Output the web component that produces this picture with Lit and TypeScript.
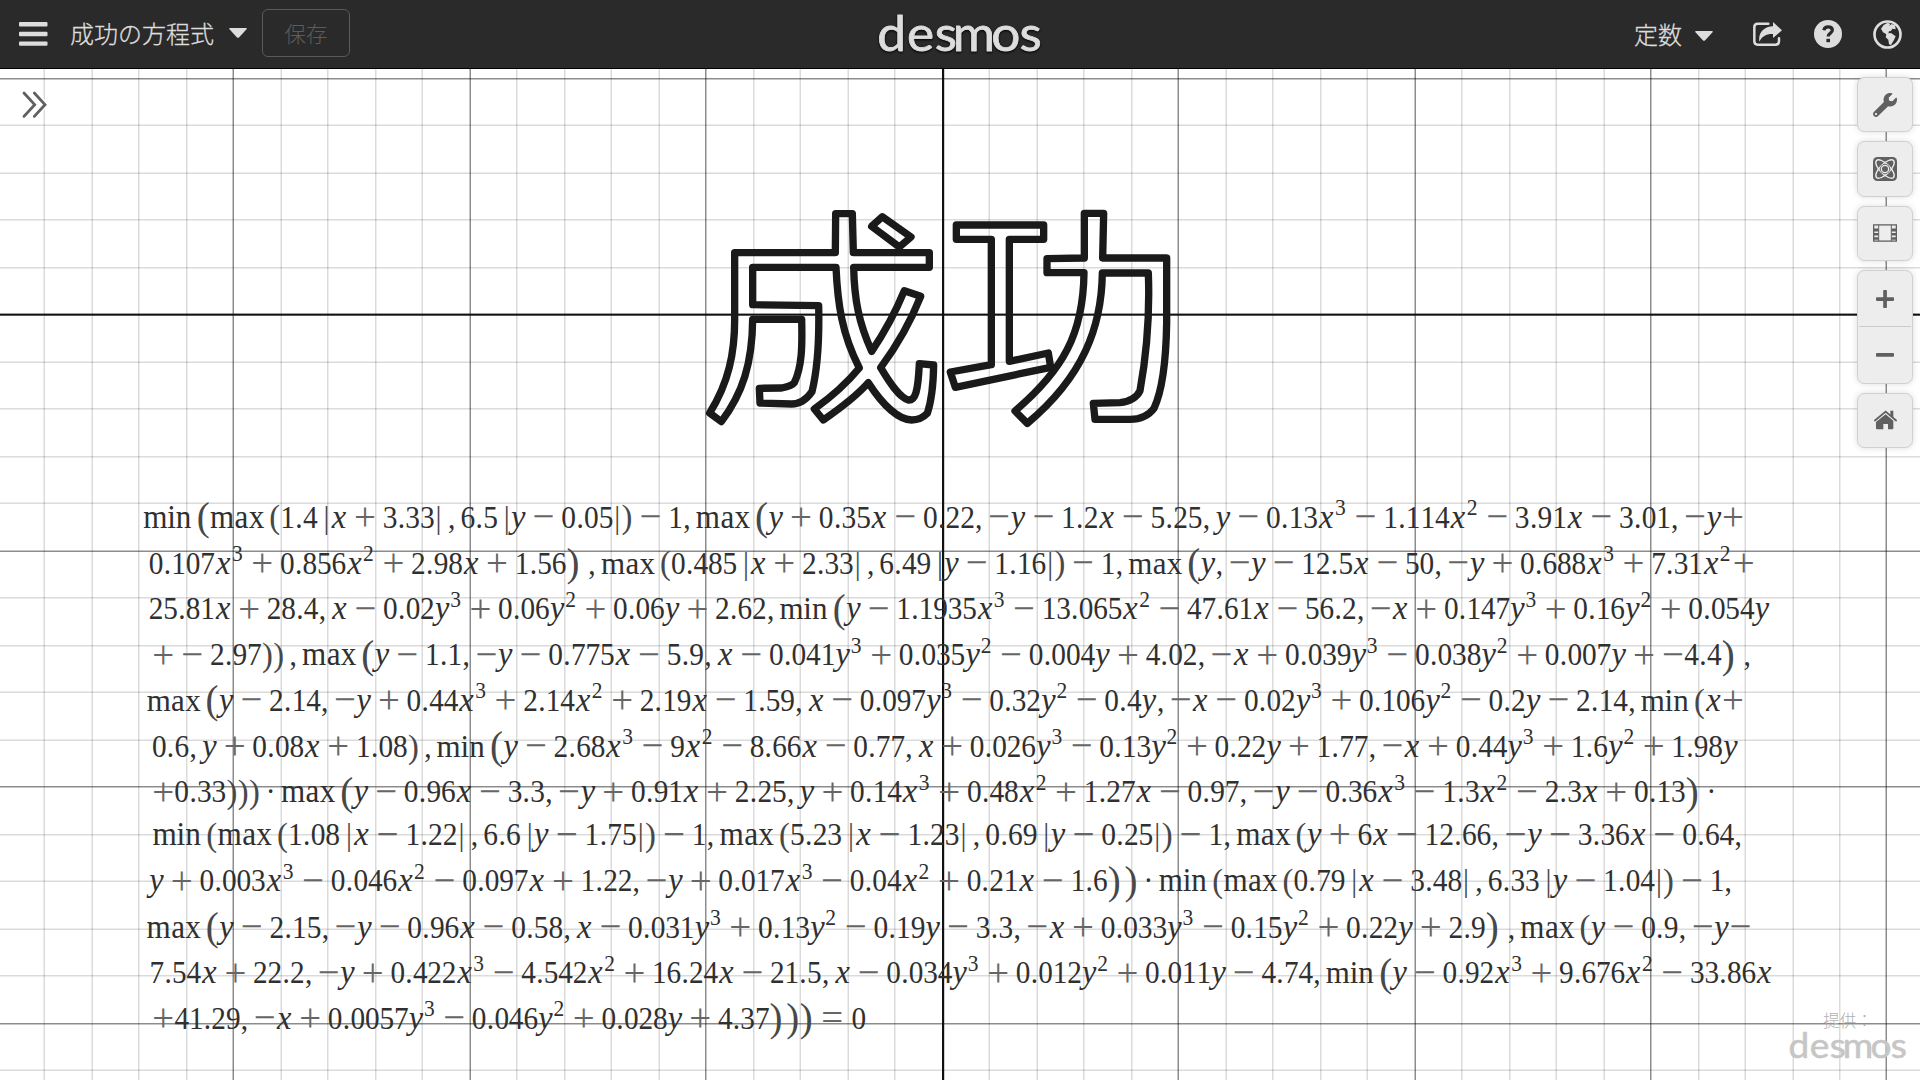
import { LitElement, html, svg, css } from "lit";
import { customElement, property } from "lit/decorators.js";

/* ---------- formula typesetting ---------- */

// ^ marks a superscript digit, { } are tall parentheses, < > are absolute-value bars, ~ is a hair of space.
type Line = { src: string; y: number; left: number; right: number };

const LINES: Line[] = [
  { y: 526.7, left: 144.2, right: 1742.6, src: "min{max(1.4<x+3.33>,6.5<y-0.05>)-1,max{y+0.35x-0.22,-y-1.2x-5.25,y-0.13x^3-1.114x^2-3.91x-3.01,-y+" },
  { y: 572.7, left: 149.9, right: 1753.4, src: "0.107x^3+0.856x^2+2.98x+1.56}~,max(0.485<x+2.33>,6.49<y-1.16>)-1,max{y,-y-12.5x-50,-y+0.688x^3+7.31x^2+" },
  { y: 618.3, left: 149.9, right: 1768.6, src: "25.81x+28.4,x-0.02y^3+0.06y^2+0.06y+2.62,min{y-1.1935x^3-13.065x^2-47.61x-56.2,-x+0.147y^3+0.16y^2+0.054y" },
  { y: 664.3, left: 153.5, right: 1749, src: "+-2.97)),max{y-1.1,-y-0.775x-5.9,x-0.041y^3+0.035y^2-0.004y+4.02,-x+0.039y^3-0.038y^2+0.007y+-4.4}~," },
  { y: 710, left: 147.6, right: 1742.6, src: "max{y-2.14,-y+0.44x^3+2.14x^2+2.19x-1.59,x-0.097y^3-0.32y^2-0.4y,-x-0.02y^3+0.106y^2-0.2y-2.14,min(x+" },
  { y: 756, left: 153, right: 1737.2, src: "0.6,y+0.08x+1.08),min{y-2.68x^3-9x^2-8.66x-0.77,x+0.026y^3-0.13y^2+0.22y+1.77,-x+0.44y^3+1.6y^2+1.98y" },
  { y: 801.3, left: 153.5, right: 1712.8, src: "+0.33)))*max{y-0.96x-3.3,-y+0.91x+2.25,y+0.14x^3+0.48x^2+1.27x-0.97,-y-0.36x^3-1.3x^2-2.3x+0.13}~*" },
  { y: 844.7, left: 153.5, right: 1740, src: "min(max(1.08<x-1.22>,6.6<y-1.75>)-1,max(5.23<x-1.23>,0.69<y-0.25>)-1,max(y+6x-12.66,-y-3.36x-0.64," },
  { y: 890.3, left: 149.9, right: 1730, src: "y+0.003x^3-0.046x^2-0.097x+1.22,-y+0.017x^3-0.04x^2+0.21x-1.6}~}*min(max(0.79<x-3.48>,6.33<y-1.04>)-1," },
  { y: 936.7, left: 147.6, right: 1749.3, src: "max{y-2.15,-y-0.96x-0.58,x-0.031y^3+0.13y^2-0.19y-3.3,-x+0.033y^3-0.15y^2+0.22y+2.9}~,max(y-0.9,-y-" },
  { y: 982.3, left: 150.7, right: 1771.6, src: "7.54x+22.2,-y+0.422x^3-4.542x^2+16.24x-21.5,x-0.034y^3+0.012y^2+0.011y-4.74,min{y-0.92x^3+9.676x^2-33.86x" },
  { y: 1028, left: 153.5, right: 864.9, src: "+41.29,-x+0.0057y^3-0.046y^2+0.028y+4.37}~}}=0" },
];

type Kind = "ord" | "op" | "bin" | "rel" | "open" | "close" | "punct";
type Atom = { text: string; kind: Kind; cls: string; w: number[]; lead: number };

const WORD_W: Record<string, number> = { m: 0.833, i: 0.278, n: 0.556, a: 0.5, x: 0.528 };
const THIN = 0.167;
const MED = 0.222;
const THICK = 0.278;

function parse(src: string): Atom[] {
  const out: Atom[] = [];
  let i = 0;
  let kern = 0;
  const push = (text: string, kind: Kind, cls: string, w: number[]) => {
    out.push({ text, kind, cls, w, lead: kern });
    kern = 0;
  };
  while (i < src.length) {
    const c = src[i];
    if (c === "m") {
      const word = src.slice(i, i + 3);
      push(word, "op", "word", [...word].map((l) => WORD_W[l]));
      i += 3;
      continue;
    }
    if (/[0-9]/.test(c)) {
      const num = /^[0-9.]+/.exec(src.slice(i))![0];
      push(num, "ord", "up", [...num].map((d) => (d === "." ? 0.278 : 0.5)));
      i += num.length;
      continue;
    }
    if (c === "^") {
      push(src[i + 1], "ord", "sup", [0.449]);
      i += 2;
      continue;
    }
    if (c === "~") kern = 0.12;
    else if (c === "x") push("x", "ord", "it", [0.572]);
    else if (c === "y") push("y", "ord", "it", [0.52]);
    else if (c === ",") push(",", "punct", "up", [0.278]);
    else if (c === "=") push("=", "rel", "sign", [0.778]);
    else if (c === "*") push("·", "bin", "up", [0.278]);
    else if (c === "+" || c === "-") push(c === "-" ? "−" : "+", "bin", "sign", [0.778]);
    else if (c === "(") push("(", "open", "par", [0.389]);
    else if (c === ")") push(")", "close", "par", [0.389]);
    else if (c === "{") push("(", "open", "big", [0.458]);
    else if (c === "}") push(")", "close", "big", [0.458]);
    else if (c === "<") push("|", "open", "bar", [0.278]);
    else if (c === ">") push("|", "close", "bar", [0.278]);
    i++;
  }
  // A sign with no operand on its left, or nothing it could join on its right, is an ordinary symbol.
  out.forEach((a, k) => {
    if (a.kind !== "bin") return;
    const p = out[k - 1];
    const n = out[k + 1];
    if (!p || p.kind === "bin" || p.kind === "open" || p.kind === "punct" || p.kind === "op" || p.kind === "rel") a.kind = "ord";
    else if (!n || n.kind === "punct" || n.kind === "close") a.kind = "ord";
  });
  return out;
}

function gap(a: Atom, b: Atom): number {
  if (b.cls === "sup") return 0;
  if (a.kind === "bin" || b.kind === "bin") return MED;
  if (a.kind === "rel" || b.kind === "rel") return THICK;
  if (a.kind === "punct") return THIN;
  if (a.kind === "op" || b.kind === "op") return a.kind === "open" ? 0 : THIN;
  if (a.kind === "ord" && b.kind === "open") return THIN;
  if (a.kind === "close" && (b.kind === "punct" || b.kind === "ord")) return THIN;
  return 0;
}

// Blank space between the advance box and the ink, at the two ends of a line.
function bearing(a: Atom, end: boolean): number {
  if (a.cls === "sign") return a.text === "−" ? 0.083 : 0.056;
  if (a.text === "·") return 0.09;
  if (a.text === ",") return 0.08;
  return end && a.cls === "it" ? 0.03 : 0.035;
}

const STRETCH = 1.05;
const SIZE: Record<string, number> = { up: 1.01, word: 1.07, it: 1.12, sup: 0.74, sign: 1.34, par: 1.12, big: 1.34, bar: 1.02 };

function typeset(line: Line) {
  const atoms = parse(line.src);
  const starts: number[] = [];
  let pos = 0;
  atoms.forEach((a, k) => {
    if (k > 0) pos += gap(atoms[k - 1], a) + a.lead;
    starts.push(pos);
    pos += a.w.reduce((s, v) => s + v, 0);
  });
  const l = bearing(atoms[0], false);
  const r = bearing(atoms[atoms.length - 1], true);
  const em = (line.right - line.left) / (pos - l - r);
  const x0 = line.left - l * em;
  const base = (line.y + 0.8) / STRETCH;
  return svg`<text class="math" transform="scale(1 ${STRETCH})">${atoms.map((a, k) => {
    let p = starts[k];
    const xs = a.w.map((w) => {
      const c = x0 + (p + (a.cls === "sup" ? (w - 0.05) / 2 : w / 2)) * em;
      p += w;
      return c.toFixed(1);
    });
    const s = SIZE[a.cls];
    let y = base;
    if (a.cls === "sup") y -= 0.41 * em;
    if (a.cls === "par" || a.cls === "big" || a.cls === "sign") y += 0.25 * em * (s - 1);
    return svg`<tspan class=${a.cls} x=${xs.join(" ")} y=${y.toFixed(1)} font-size=${(s * em).toFixed(2)}>${a.text}</tspan>`;
  })}</text>`;
}

/* ---------- graph ---------- */

const UNIT = 1.5;

function gridLines() {
  const out = [];
  for (let k = -19; k <= 20; k++) {
    if (k === 0) continue;
    const x = (k === 20 ? 1257 : Math.floor(628 + 31.5 * k)) * UNIT;
    out.push(svg`<rect class=${k % 5 === 0 ? "major" : "minor"} x=${x} y="68" width="1.5" height="1012"></rect>`);
  }
  for (let k = -5; k <= 16; k++) {
    if (k === 0) continue;
    const y = Math.floor(209.5 + 31.5 * k) * UNIT;
    out.push(svg`<rect class=${k % 5 === 0 ? "major" : "minor"} x="0" y=${y} width="1920" height="1.5"></rect>`);
  }
  return out;
}

@customElement("graph-paper")
export class GraphPaper extends LitElement {
  static styles = css`
    :host { display: block; width: 1920px; height: 1012px; }
    svg { display: block; }
    .minor { fill: #000; fill-opacity: 0.14; }
    .major { fill: #000; fill-opacity: 0.45; }
    .axis { fill: #111; }
    .curve { fill: none; stroke: #1a1a1a; stroke-width: 22; stroke-linejoin: round; stroke-linecap: round; }
    .math { font-family: "Liberation Serif", "Times New Roman", serif; fill: #303030; text-anchor: middle; }
    .it { font-style: italic; }
    .sign { fill: #666; }
    .par, .big, .bar { fill: #484848; }
  `;
  render() {
    return html`<svg width="1920" height="1012" viewBox="0 68 1920 1012">
      ${gridLines()}
      <rect class="axis" x="0" y="313.6" width="1920" height="2.1"></rect>
      <rect class="axis" x="942" y="68" width="2.2" height="1012"></rect>
      <g class="curve" transform="translate(690 190) scale(.33333)">
        <path d="M437 71H487L490 188H718V232H491C493 330 507 400 545 484C585 425 615 370 643 302L692 319C662 395 622 465 572 533C600 580 628 622 655 630C676 632 684 605 688 521L731 525C730 590 722 640 712 670C695 688 680 690 665 690C625 688 578 645 535 578C498 620 455 652 400 690L373 657C425 620 470 580 508 534C455 430 443 340 438 232H188V344L386 347C388 440 382 540 366 605C350 628 330 642 305 642L210 639L208 595L275 594C295 590 308 585 313 578C336 530 337 470 335 388H188C187 520 158 610 94 695L59 669C115 580 135 490 134 380V188H436Z"></path>
        <path d="M577 80L663 141L628 171L545 109Z"></path>
      </g>
      <g class="curve" transform="translate(930 190) scale(.33333)">
        <path d="M79 105H341V148H238V514L355 489L362 532L76 592L61 546L184 524V148H79Z"></path>
        <path d="M463 70H521L518 204H710V400C708 520 698 600 672 655C655 678 630 688 600 688H495L490 640L570 638C600 635 622 620 630 602C652 480 660 380 655 249H517C515 410 460 560 292 700L255 663C400 540 460 430 462 248H351V206L463 204Z"></path>
      </g>
      ${LINES.map(typeset)}
    </svg>`;
  }
}

/* ---------- wordmark ---------- */

@customElement("word-mark")
export class WordMark extends LitElement {
  @property({ type: Number }) width = 164;
  @property() tone = "#ddd";
  static styles = css`
    :host { display: block; }
    svg { display: block; overflow: visible; }
    text {
      font-family: Lato, "Open Sans", sans-serif; font-size: 47.5px; text-anchor: middle;
      stroke-width: 0.8px; stroke-linejoin: round;
    }
  `;
  render() {
    return html`<svg width=${this.width} height=${this.width * 0.25} viewBox="0 0 164 41">
      <text transform="scale(1.08 1)" x="12.6 39.3 62.8 88.7 118.4 141.200" y="37" fill=${this.tone} stroke=${this.tone}>desmos</text>
    </svg>`;
  }
}

/* ---------- page ---------- */

@customElement("app-root")
export class AppRoot extends LitElement {
  static styles = css`
    :host {
      display: block; position: relative; width: 1920px; height: 1080px; overflow: hidden; background: #fff;
      font-family: "Noto Sans CJK JP", sans-serif;
    }
    * { box-sizing: border-box; }
    svg { display: block; }
    .bar {
      display: grid; grid-template-columns: 1fr 164px 1fr; align-items: center;
      height: 68px; background: #2a2a2a; color: #ddd; padding: 0 18px 0 19px;
      box-shadow: 0 1px 0 #000; position: relative;
    }
    .left { display: flex; align-items: center; height: 68px; }
    .title, .const { -webkit-text-stroke: 0.3px #ddd; }
    .title { font-size: 24px; line-height: 32px; font-weight: 300; margin: -2px 15px 0 22px; white-space: nowrap; }
    .caret { margin-top: -2px; }
    .save {
      width: 88px; height: 48px; margin: 0 0 2px 15px; border: 1px solid #5a5a5a; border-radius: 6px; background: none;
      color: #5c5c5c; font: 300 21.5px/44px "Noto Sans CJK JP", sans-serif; padding: 0;
    }
    .right { display: flex; align-items: center; justify-content: flex-end; height: 68px; }
    .const { font-size: 24px; line-height: 32px; font-weight: 300; margin: -1px 13px 0 0; }
    .const-caret { margin: 4px 40px 0 0; }
    .share { margin-right: 31.5px; }
    .help { margin-right: 31.5px; }
    .fill { fill: #ddd; }
    .line { fill: none; stroke: #ddd; }
    .mark { transform: translateX(-1px); filter: drop-shadow(0 1px 1px #000); }
    .expand { position: absolute; left: 20px; top: 89px; }
    .tools { position: absolute; left: 1857px; top: 77px; display: flex; flex-direction: column; gap: 9px; }
    .tool, .zoom {
      width: 56px; background: #ededed; border: 1px solid #d0d0d0; border-radius: 7.5px;
      box-shadow: 0 0 6px rgba(0, 0, 0, 0.14);
    }
    .tool { height: 55.4px; display: grid; place-items: center; }
    .zoom { height: 113.5px; display: flex; flex-direction: column; padding: 0 1px; }
    .half { flex: 1; display: grid; place-items: center; }
    .half + .half { border-top: 1.5px solid #ccc; }
    .ink { fill: #606060; }
    .stroke { fill: none; stroke: #606060; }
    .pale { fill: none; stroke: #ededed; }
    .credit { position: absolute; left: 1789px; top: 1010px; width: 118px; display: flex; flex-direction: column; align-items: center; }
    .by { font-size: 16.5px; line-height: 21px; font-weight: 300; color: #b0b0b0; white-space: nowrap; }
  `;

  render() {
    return html`
      <header class="bar">
        <div class="left">
          <svg width="29" height="24" viewBox="0 0 29 24" class="fill">
            <rect width="28.5" height="4.4" y="0" rx="1"></rect><rect width="28.5" height="4.4" y="9.8" rx="1"></rect><rect width="28.5" height="4.4" y="19.4" rx="1"></rect>
          </svg>
          <span class="title">成功の方程式</span>
          <svg class="caret fill" width="18" height="10" viewBox="0 0 18 10"><path d="M1 0H17Q18.5 .3 17.3 1.6L10.2 9.3Q9 10.4 7.8 9.3L.7 1.6Q-.5 .3 1 0Z"></path></svg>
          <button class="save">保存</button>
        </div>
        <word-mark class="mark"></word-mark>
        <div class="right">
          <span class="const">定数</span>
          <svg class="const-caret fill" width="18" height="10" viewBox="0 0 18 10"><path d="M1 0H17Q18.5 .3 17.3 1.6L10.2 9.3Q9 10.4 7.8 9.3L.7 1.6Q-.5 .3 1 0Z"></path></svg>
          <svg class="share" width="29" height="24" viewBox="459 65 87 72">
            <path class="line" stroke-width="7.5" stroke-linecap="round" d="M505 70H473Q463 70 463 80V123Q463 133 473 133H527Q537 133 537 123V114"></path>
            <path class="fill" d="M519 65L546 90L519 113V101C500 100 486 108 478 124C474 98 492 78 519 78Z"></path>
          </svg>
          <svg class="help" width="28" height="28" viewBox="0 0 28 28">
            <circle class="fill" cx="14" cy="14" r="14"></circle>
            <path d="M9.9 10.2C10.3 7.9 12 6.9 14.1 6.9C16.6 6.9 18.3 8.2 18.3 10.3C18.3 13.2 14.2 13 14.2 16.6" fill="none" stroke="#2a2a2a" stroke-width="3.3"></path>
            <rect x="12.4" y="18.8" width="3.6" height="3.4" fill="#2a2a2a"></rect>
          </svg>
          <svg width="29" height="29" viewBox="818 58 87 87">
            <circle class="line" cx="861.5" cy="101.500" r="39" stroke-width="8"></circle>
            <path class="fill" d="M842 84L850 73L862 66L870 70L866 76L874 70L884 74L886 86L876 84L872 91L866 92L864 98L872 97L886 107L881 118L872 133L866 131L864 117L856 110L858 101L848 95Z"></path>
          </svg>
        </div>
      </header>
      <graph-paper></graph-paper>
      <svg class="expand" width="30" height="32" viewBox="60 267 90 96">
        <g fill="none" stroke="#fff" stroke-width="18"><path d="M72 279L104 314L72 349M103 279L135 314L103 349"></path></g>
        <g fill="none" stroke="#606060" stroke-width="8.5" stroke-linecap="round"><path d="M72 279L104 314L72 349M103 279L135 314L103 349"></path></g>
      </svg>
      <nav class="tools">
        <div class="tool">
          <svg width="24" height="24" viewBox="0 0 512 512" class="ink"><path d="M507.730 109.100c-2.240-9.030-13.540-12.090-20.120-5.510l-74.360 74.360-67.880-11.310-11.310-67.880 74.360-74.360c6.620-6.620 3.430-17.900-5.660-20.160-47.380-11.740-99.550.910-136.580 37.930-39.640 39.640-50.550 97.100-34.050 147.200L18.740 402.760c-24.990 24.990-24.990 65.510 0 90.500 24.990 24.990 65.510 24.990 90.500 0l213.210-213.210c50.120 16.710 107.470 5.680 147.370-34.220 37.070-37.070 49.700-89.320 37.910-136.730zM64 472c-13.250 0-24-10.750-24-24 0-13.260 10.750-24 24-24s24 10.740 24 24c0 13.250-10.750 24-24 24z"></path></svg>
        </div>
        <div class="tool">
          <svg width="24" height="24" viewBox="-36 -36 72 72">
            <rect class="ink" x="-36" y="-36" width="72" height="72" rx="13"></rect>
            <g class="pale" stroke-width="4">
              <ellipse rx="36" ry="15" transform="rotate(45)"></ellipse>
              <ellipse rx="36" ry="15" transform="rotate(-45)"></ellipse>
              <circle r="15" fill="#606060" stroke="none"></circle>
              <circle r="11"></circle>
            </g>
          </svg>
        </div>
        <div class="tool">
          <svg width="24" height="18" viewBox="158 10 74 54">
            <rect class="stroke" x="160" y="12" width="70" height="50" stroke-width="4"></rect>
            <path class="stroke" stroke-width="3" d="M175.500 12V62M214.500 12V62"></path>
            <path class="ink" d="M160 23h15v9h-15zM160 37h15v8h-15zM160 50h15v8h-15zM215 23h15v9h-15zM215 37h15v8h-15zM215 50h15v8h-15z"></path>
          </svg>
        </div>
        <div class="zoom">
          <div class="half"><svg width="18" height="18" viewBox="0 0 18 18" class="ink"><rect y="7.200" width="18" height="3.700" rx=".8"></rect><rect x="7.200" width="3.700" height="18" rx=".8"></rect></svg></div>
          <div class="half"><svg width="18" height="4" viewBox="0 0 18 4" class="ink"><rect width="18" height="3.800" rx=".8"></rect></svg></div>
        </div>
        <div class="tool">
          <svg width="23" height="20" viewBox="160 571 69 60">
            <path class="stroke" stroke-width="5.500" d="M161 604L195 576L228 604"></path>
            <path class="ink" d="M209 573H218V594L209 587ZM195 584L218 603V626Q218 629 215 629H202V613H188V629H169Q166 629 166 626V607Z"></path>
          </svg>
        </div>
      </nav>
      <div class="credit">
        <span class="by">提供：</span>
        <word-mark .width=${118} tone="#c6c6c6"></word-mark>
      </div>
    `;
  }
}
